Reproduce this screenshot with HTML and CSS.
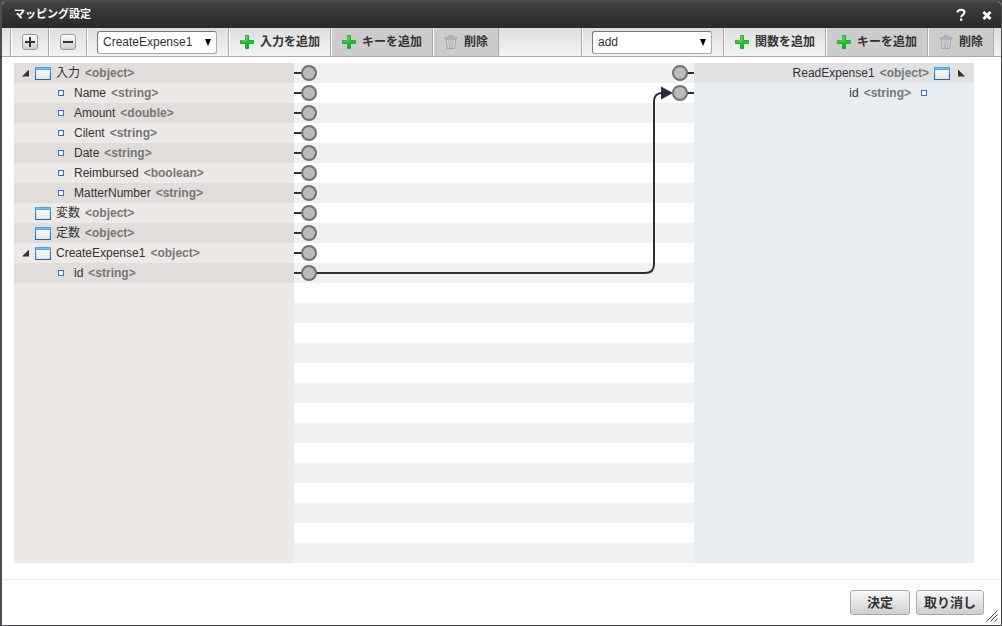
FILE: index.html
```html
<!DOCTYPE html>
<html lang="ja">
<head>
    <meta charset="UTF-8">
    <meta name="viewport" content="width=device-width, initial-scale=1.0">
    <title>マッピング設定</title>
    <link rel="stylesheet" href="styles.css">
</head>
<body>
    <!-- Shared icons -->
    <svg class="defs" width="0" height="0" aria-hidden="true">
        <defs>
            <linearGradient id="green" x1="0" y1="0" x2="0" y2="1">
                <stop offset="0" stop-color="#4fd45a"/>
                <stop offset="1" stop-color="#12a51c"/>
            </linearGradient>
            <linearGradient id="frame" x1="0" y1="0" x2="0" y2="1">
                <stop offset="0" stop-color="#3fa6ea"/>
                <stop offset="1" stop-color="#2566a8"/>
            </linearGradient>
            <linearGradient id="pane" x1="0" y1="0" x2="0" y2="1">
                <stop offset="0" stop-color="#ffffff"/>
                <stop offset="1" stop-color="#e6e6e6"/>
            </linearGradient>
        </defs>
        <symbol id="icon-plus" viewBox="0 0 14 14">
            <path d="M5.5 .5h3v5h5v3h-5v5h-3v-5h-5v-3h5z" fill="url(#green)" stroke="#1fae2a"/>
            <path d="M6 1.500v4.500h-4.500" fill="none" stroke="#7ade82" stroke-width=".7"/>
        </symbol>
        <symbol id="icon-trash" viewBox="0 0 14 14">
            <path d="M2.500 4h9l-.7 9.500H3.200z" fill="#dcdcdf" stroke="#a0a0a5"/>
            <path d="M5 5l.3 8M7 5v8M9 5l-.3 8" fill="none" stroke="#9a9aa0" stroke-width=".8"/>
            <path d="M1 2.500h12v1.500H1z" fill="#c5c5ca" stroke="#98989d" stroke-width=".6"/>
            <path d="M5 2V.8h4V2" fill="none" stroke="#98989d"/>
        </symbol>
        <symbol id="icon-window" viewBox="0 0 16 13">
            <rect x=".5" y=".5" width="15" height="12" rx=".5" fill="url(#pane)" stroke="url(#frame)" stroke-width="1.2"/>
            <path d="M1 1h14v2H1z" fill="#48aeec"/>
            <path d="M1 1h14v1H1z" fill="#6bc2f3"/>
        </symbol>
    </svg>

    <div class="dialog">
        <header class="titlebar">
            <h1>マッピング設定</h1>
            <button type="button" class="title-btn" aria-label="ヘルプ">
                <svg width="12" height="14" viewBox="0 0 12 14"><path d="M2.500 4.500C2.500 2.500 4 1.800 6 1.800S9.500 2.700 9.500 4.500C9.500 6.600 6.200 6.600 6.200 9.200" fill="none" stroke="#fff" stroke-width="2"/><path d="M5 10.500h2.300v2.200H5z" fill="#fff"/></svg>
            </button>
            <button type="button" class="title-btn" aria-label="閉じる">
                <svg width="12" height="14" viewBox="0 0 12 14"><path d="M2.500 4l7 7M9.500 4l-7 7" fill="none" stroke="#fff" stroke-width="3"/></svg>
            </button>
        </header>

        <div class="toolbar">
            <div class="group">
                <div class="cell"><button type="button" class="square" aria-label="展開"><svg width="12" height="12" viewBox="0 0 12 12"><path d="M1 6h10M6 1v10" stroke="#333" stroke-width="2"/></svg></button></div>
                <div class="cell"><button type="button" class="square" aria-label="折りたたむ"><svg width="12" height="12" viewBox="0 0 12 12"><path d="M1 6h10" stroke="#333" stroke-width="2"/></svg></button></div>
                <div class="cell picker">
                    <div class="select"><select aria-label="入力元"><option>CreateExpense1</option></select></div>
                </div>
                <button type="button" class="tool"><svg width="14" height="14"><use href="#icon-plus"/></svg>入力を追加</button>
                <button type="button" class="tool" disabled><svg width="14" height="14"><use href="#icon-plus"/></svg>キーを追加</button>
                <button type="button" class="tool" disabled><svg width="14" height="14"><use href="#icon-trash"/></svg>削除</button>
            </div>
            <div class="group">
                <div class="cell picker">
                    <div class="select"><select aria-label="関数"><option>add</option></select></div>
                </div>
                <button type="button" class="tool"><svg width="14" height="14"><use href="#icon-plus"/></svg>関数を追加</button>
                <button type="button" class="tool" disabled><svg width="14" height="14"><use href="#icon-plus"/></svg>キーを追加</button>
                <button type="button" class="tool" disabled><svg width="14" height="14"><use href="#icon-trash"/></svg>削除</button>
            </div>
        </div>

        <main class="mapper">
            <ul class="tree source">
                <li><i class="arrow open"></i><svg class="win"><use href="#icon-window"/></svg>入力 <b>&lt;object&gt;</b></li>
                <li class="leaf"><i class="dot"></i>Name <b>&lt;string&gt;</b></li>
                <li class="leaf"><i class="dot"></i>Amount <b>&lt;double&gt;</b></li>
                <li class="leaf"><i class="dot"></i>Cilent <b>&lt;string&gt;</b></li>
                <li class="leaf"><i class="dot"></i>Date <b>&lt;string&gt;</b></li>
                <li class="leaf"><i class="dot"></i>Reimbursed <b>&lt;boolean&gt;</b></li>
                <li class="leaf"><i class="dot"></i>MatterNumber <b>&lt;string&gt;</b></li>
                <li><i class="arrow"></i><svg class="win"><use href="#icon-window"/></svg>変数 <b>&lt;object&gt;</b></li>
                <li><i class="arrow"></i><svg class="win"><use href="#icon-window"/></svg>定数 <b>&lt;object&gt;</b></li>
                <li><i class="arrow open"></i><svg class="win"><use href="#icon-window"/></svg>CreateExpense1 <b>&lt;object&gt;</b></li>
                <li class="leaf"><i class="dot"></i>id <b>&lt;string&gt;</b></li>
            </ul>

            <!-- Only the middle part of the wire stretches with the window -->
            <div class="canvas">
                <svg class="ports" width="30" height="500">
                    <path class="wire" d="M0 10h8M0 30h8M0 50h8M0 70h8M0 90h8M0 110h8M0 130h8M0 150h8M0 170h8M0 190h8M0 210h30"/>
                    <circle cx="15" cy="10" r="7"/>
                    <circle cx="15" cy="30" r="7"/>
                    <circle cx="15" cy="50" r="7"/>
                    <circle cx="15" cy="70" r="7"/>
                    <circle cx="15" cy="90" r="7"/>
                    <circle cx="15" cy="110" r="7"/>
                    <circle cx="15" cy="130" r="7"/>
                    <circle cx="15" cy="150" r="7"/>
                    <circle cx="15" cy="170" r="7"/>
                    <circle cx="15" cy="190" r="7"/>
                    <circle cx="15" cy="210" r="7"/>
                </svg>
                <svg class="stretch" viewBox="0 0 100 500" preserveAspectRatio="none">
                    <path class="wire" d="M0 210h100"/>
                </svg>
                <svg class="ports" width="60" height="500">
                    <path class="wire" d="M52 10h8M52 30h8M0 210H11Q20 210 20 201V39Q20 30 28 30"/>
                    <path class="head" d="M27 23.500L39 30L27 36.500z"/>
                    <circle cx="46" cy="10" r="7"/>
                    <circle cx="46" cy="30" r="7"/>
                </svg>
            </div>

            <ul class="tree target">
                <li>ReadExpense1 <b>&lt;object&gt;</b><svg class="win"><use href="#icon-window"/></svg><i class="arrow open"></i></li>
                <li class="leaf">id <b>&lt;string&gt;</b><i class="dot"></i></li>
            </ul>
        </main>

        <footer class="footer">
            <button type="button" class="btn">決定</button>
            <button type="button" class="btn">取り消し</button>
            <svg class="grip" width="12" height="12" viewBox="0 0 12 12"><path d="M.5 11.500l11-11M4.500 11.500l7-7M8.500 11.500l3-3" stroke="#444" fill="none"/></svg>
        </footer>
    </div>
</body>
</html>
```

FILE: styles.css
```css
* {
    margin: 0;
    padding: 0;
    box-sizing: border-box;
}

body {
    font-family: "Liberation Sans", "Noto Sans CJK JP", sans-serif;
    font-size: 12px;
    line-height: 20px;
    color: #333;
    background: #4b4b50;
}

button, select {
    font: inherit;
    color: inherit;
}

.defs {
    position: absolute;
}

.dialog {
    display: flex;
    flex-direction: column;
    min-height: 100vh;
    border: solid #4b4b50;
    border-width: 2px 1px 1px 2px;
    border-radius: 5px 5px 0 0;
    background: #fff;
    position: relative;
}

/* Title bar */
.titlebar {
    display: flex;
    align-items: center;
    gap: 14px;
    height: 26px;
    padding: 0 8px 0 12px;
    background: linear-gradient(#404040, #2a2a2a);
    border-radius: 4px 4px 0 0;
}

.titlebar h1 {
    flex: 1;
    font-size: 11px;
    color: #fff;
    padding-bottom: 2px;
}

.title-btn {
    display: flex;
    border: none;
    background: none;
    cursor: pointer;
}

/* Toolbar */
.toolbar {
    display: flex;
    justify-content: space-between;
    height: 29px;
    padding: 0 7px 0 8px;
    border-bottom: 1px solid #aaa;
    background: linear-gradient(#dedede, #f3f3f3);
}

.group {
    display: flex;
    border-right: 1px solid #aaa;
}

.cell {
    display: flex;
    align-items: center;
    justify-content: center;
    width: 38px;
    border-left: 1px solid #aaa;
    box-shadow: inset 1px 0 #fff;
}

.picker {
    width: 142px;
    justify-content: flex-start;
    padding-left: 10px;
}

.square {
    display: flex;
    align-items: center;
    justify-content: center;
    width: 16px;
    height: 16px;
    border: 1px solid #999;
    border-radius: 3px;
    background: linear-gradient(#fff, #ccc);
}

.select {
    position: relative;
    width: 120px;
}

.select select {
    appearance: none;
    display: block;
    width: 100%;
    height: 23px;
    padding: 0 20px 0 5px;
    border: 1px solid #aaa;
    border-top-color: #777;
    border-left-color: #777;
    border-radius: 3px;
    background: #fff;
}

.select::after {
    content: "";
    position: absolute;
    top: 8px;
    right: 6px;
    border: solid transparent;
    border-width: 7px 3px 0;
    border-top-color: #000;
    pointer-events: none;
}

.tool {
    display: flex;
    align-items: center;
    gap: 6px;
    padding: 0 10px 0 11px;
    border: none;
    border-left: 1px solid #aaa;
    box-shadow: inset 1px 0 #fff;
    background: none;
    font-weight: bold;
    white-space: nowrap;
}

.tool:disabled {
    background: #ccc;
    color: #333;
}

/* Mapping area */
.mapper {
    flex: 1;
    display: grid;
    grid-template-columns: 280px 1fr 280px;
    grid-template-rows: 500px;
    padding: 6px 27px 16px 12px;
}

.tree {
    list-style: none;
}

.tree li {
    display: flex;
    align-items: center;
    height: 20px;
    padding-left: 8px;
}

.tree b {
    margin-left: 5px;
    color: #777;
}

.source {
    background: #ede9e6;
}

.source li:nth-child(odd) {
    background: #e1dddb;
}

.target {
    background: #e8edf0;
}

.target li {
    justify-content: flex-end;
    padding: 0 8px 0 0;
}

.target li:nth-child(odd) {
    background: #dfe1e3;
}

.source .leaf {
    padding-left: 44px;
}

.target .leaf {
    padding-right: 47px;
}

.win {
    width: 16px;
    height: 13px;
    margin-right: 5px;
}

.target .win {
    margin: 0 8px 0 5px;
}

.arrow {
    width: 7px;
    height: 7px;
    margin-right: 6px;
}

.arrow.open {
    background: #333;
    clip-path: polygon(100% 0, 100% 100%, 0 100%);
}

.target .arrow {
    margin: 0 1px 0 0;
    clip-path: polygon(0 0, 100% 100%, 0 100%);
}

.dot {
    width: 6px;
    height: 6px;
    margin-right: 10px;
    border: 1px solid #3a69dc;
    background: #fff;
}

.target .dot {
    margin: 0 0 0 10px;
}

.canvas {
    display: flex;
    background: repeating-linear-gradient(#f1f1f1 0 20px, #fff 20px 40px);
}

.ports {
    flex: none;
}

.ports circle {
    fill: #bbb;
    stroke: #707070;
    stroke-width: 2px;
}

.stretch {
    flex: 1;
    min-width: 0;
    height: 500px;
}

.wire {
    fill: none;
    stroke: #253038;
    stroke-width: 2px;
}

.head {
    fill: #253038;
}

/* Footer */
.footer {
    display: flex;
    justify-content: flex-end;
    align-items: flex-start;
    gap: 6px;
    height: 46px;
    padding: 10px 17px 0 0;
    border-top: 1px solid #eee;
}

.btn {
    min-width: 60px;
    height: 25px;
    padding: 0 7px;
    border: 1px solid #aaa;
    border-radius: 3px;
    background: linear-gradient(#f8f8f8, #cfcfcf);
    font-size: 13px;
    font-weight: bold;
}

.grip {
    position: absolute;
    right: 3px;
    bottom: 3px;
}
```
